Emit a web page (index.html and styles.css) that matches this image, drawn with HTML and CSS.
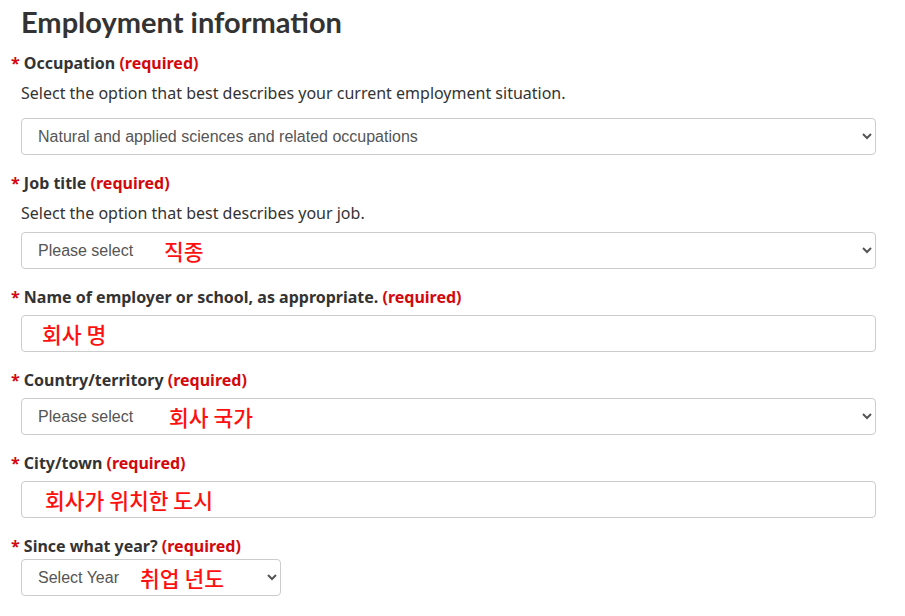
FILE: index.html
```html
<!DOCTYPE html>
<html lang="en">
<head>
<meta charset="utf-8">
<title>Employment information</title>
<link rel="stylesheet" href="styles.css">
</head>
<body>
<main class="form">
  <h2 class="title">Employment information</h2>

  <div class="field">
    <label class="label"><span class="star">*</span> Occupation <strong class="req">(required)</strong></label>
    <p class="hint">Select the option that best describes your current employment situation.</p>
    <div class="control">
      <select class="select full"><option>Natural and applied sciences and related occupations</option></select>
    </div>
  </div>

  <div class="field">
    <label class="label"><span class="star">*</span> Job title <strong class="req">(required)</strong></label>
    <p class="hint hint-tight">Select the option that best describes your job.</p>
    <div class="control">
      <select class="select full"><option>Please select</option></select>
      <span class="note note-job">직종</span>
    </div>
  </div>

  <div class="field">
    <label class="label"><span class="star">*</span> Name of employer or school, as appropriate. <strong class="req">(required)</strong></label>
    <div class="control">
      <input class="input full" type="text">
      <span class="note note-employer">회사 명</span>
    </div>
  </div>

  <div class="field">
    <label class="label"><span class="star">*</span> Country/territory <strong class="req">(required)</strong></label>
    <div class="control">
      <select class="select full"><option>Please select</option></select>
      <span class="note note-country">회사 국가</span>
    </div>
  </div>

  <div class="field">
    <label class="label"><span class="star">*</span> City/town <strong class="req">(required)</strong></label>
    <div class="control">
      <input class="input full" type="text">
      <span class="note note-city">회사가 위치한 도시</span>
    </div>
  </div>

  <div class="field field-last">
    <label class="label label-tight"><span class="star">*</span> Since what year? <strong class="req">(required)</strong></label>
    <div class="control">
      <select class="select small"><option>Select Year</option></select>
      <span class="note note-year">취업 년도</span>
    </div>
  </div>
</main>
</body>
</html>
```

FILE: styles.css
```css
html, body {
  margin: 0;
  padding: 0;
  background: #fff;
}

.form {
  padding: 4px 29px 0 11px;
  font-family: "Noto Sans", "Open Sans", sans-serif;
  color: #333;
}

.title {
  margin: 0 0 10px 10px;
  font-family: Lato, "Noto Sans", sans-serif;
  font-weight: 700;
  font-size: 29px;
  line-height: 36px;
  color: #333;
}

.field {
  margin-bottom: 15px;
}

.label {
  display: block;
  font-size: 16px;
  font-weight: 700;
  line-height: 26px;
  margin-bottom: 5px;
}

.label-tight {
  margin-bottom: 0;
}

.star {
  color: #d3080c;
}

.req {
  color: #d3080c;
  font-weight: 700;
}

.hint {
  margin: 2px 0 13px 10px;
  font-size: 16px;
  line-height: 24px;
  color: #333;
}

.hint-tight {
  margin-bottom: 7px;
}

.control {
  position: relative;
  margin-left: 10px;
}

.select,
.input {
  display: block;
  box-sizing: border-box;
  height: 37px;
  border: 1px solid #ccc;
  border-radius: 4px;
  background: #fff;
  font-family: "Liberation Sans", Arial, sans-serif;
  font-size: 16px;
  color: #555;
  padding: 0 12px;
  margin: 0;
}

.full {
  width: 855px;
}

.small {
  width: 260px;
}

.note {
  position: absolute;
  top: 50%;
  transform: translateY(-50%);
  font-family: "Noto Sans CJK KR", "Noto Sans", sans-serif;
  font-size: 21.5px;
  font-weight: 500;
  color: #ff1010;
  line-height: 1;
  pointer-events: none;
}

.note-job { left: 143px; }
.note-employer { left: 21px; }
.note-country { left: 148px; }
.note-city { left: 24px; }
.note-year { left: 119px; }
```
